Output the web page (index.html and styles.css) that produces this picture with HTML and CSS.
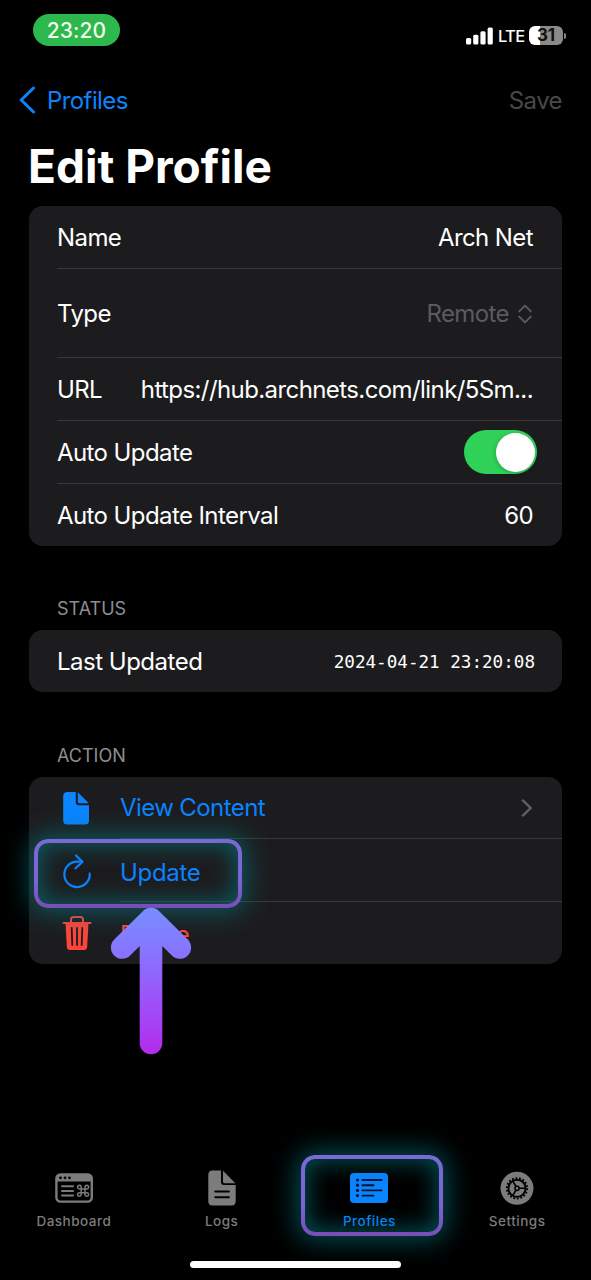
FILE: index.html
```html
<!DOCTYPE html>
<html lang="en">
<head>
<meta charset="utf-8">
<title>Edit Profile</title>
<link rel="stylesheet" href="styles.css">
</head>
<body>
<div class="screen">
  <header class="status">
    <span class="clock">23:20</span>
    <div class="status-right">
      <svg class="signal" width="28" height="18" viewBox="0 0 28 18" fill="#fff"><rect x="0" y="11" width="5.2" height="6.5" rx="1.5"/><rect x="7.2" y="7.7" width="5.2" height="9.8" rx="1.5"/><rect x="14.4" y="4.3" width="5.2" height="13.2" rx="1.5"/><rect x="21.6" y="0.5" width="5.2" height="17" rx="1.5"/></svg>
      <span class="lte">LTE</span>
      <span class="battery">31</span>
      <span class="nub"></span>
    </div>
  </header>

  <nav class="nav">
    <a class="back"><svg width="17" height="28" viewBox="0 0 17 28" fill="none" stroke="#0a84ff" stroke-width="3" stroke-linecap="round" stroke-linejoin="round"><path d="M14.5 2 2.2 14l12.3 12"/></svg><span>Profiles</span></a>
    <span class="save">Save</span>
  </nav>
  <h1 class="title">Edit Profile</h1>

  <section class="card form">
    <div class="row"><span>Name</span><span>Arch Net</span></div>
    <div class="row tall"><span>Type</span><span class="muted"><span>Remote</span><svg width="14" height="20" viewBox="0 0 14 20" fill="none" stroke="#5b5b5f" stroke-width="2" stroke-linecap="round" stroke-linejoin="round"><path d="M1.2 7.4 7 1.6l5.800 5.800M1.200 12.600 7 18.400l5.800-5.800"/></svg></span></div>
    <div class="row"><span>URL</span><span>https://hub.archnets.com/link/5Sm...</span></div>
    <div class="row"><span>Auto Update</span><span class="toggle"><span class="knob"></span></span></div>
    <div class="row"><span>Auto Update Interval</span><span>60</span></div>
  </section>

  <h2 class="heading">STATUS</h2>
  <section class="card"><div class="row"><span class="last-updated">Last Updated</span><time class="stamp">2024-04-21 23:20:08</time></div></section>

  <h2 class="heading">ACTION</h2>
  <section class="card actions">
    <div class="row action">
      <svg class="icon" width="30" height="34" viewBox="0 0 30 34" fill="#0a84ff"><path d="M5.500 1H13.800V11.500Q13.800 14.200 16.500 14.200H27V29.500Q27 33.500 23 33.500H5Q1.200 33.500 1.200 29.500V5Q1.200 1 5.500 1Z"/><path d="M15.800 1.200 26.800 12.300H17Q15.800 12.300 15.800 11Z"/></svg>
      <span>View Content</span>
      <svg class="chevron" width="12" height="18" viewBox="0 0 12 18" fill="none" stroke="#636367" stroke-width="2.400" stroke-linecap="round" stroke-linejoin="round"><path d="M2 1.500 9.700 9 2 16.500"/></svg>
    </div>
    <div class="row action update">
      <svg class="icon" width="30" height="36" viewBox="0 0 30 36" fill="none" stroke="#0a84ff" stroke-width="2.200" stroke-linecap="round" stroke-linejoin="round"><path d="M20 8.700H15A12.700 12.700 0 1 0 27.700 20.500"/><path d="M14 2.500 20.500 8.900 13.500 15.300"/></svg>
      <span>Update</span>
      <span class="highlight update-mark"></span>
    </div>
    <div class="row action delete">
      <svg class="icon" width="30" height="36" viewBox="0 0 30 36" fill="none" stroke="#ff453a" stroke-linecap="round"><path d="M1.500 8H28.500" stroke-width="2"/><path d="M9 7V4.500Q9 2 11.500 2h7Q21 2 21 4.500V7" stroke-width="2"/><path d="M3.500 8h23l-1.300 23.500Q25 35 22 35H8Q5 35 4.800 31.500Z" fill="#ff453a" stroke="none"/><path d="M9.700 13l.6 17M15 13v17M20.300 13l-.6 17" stroke="#1c1c1e" stroke-width="1.800"/></svg>
      <span class="delete-label">Delete</span>
      <svg class="arrow" width="82" height="148" viewBox="0 0 82 148" fill="none"><defs><linearGradient id="arrowFill" gradientUnits="userSpaceOnUse" x1="0" y1="0" x2="0" y2="147"><stop offset="0" stop-color="#778fff"/><stop offset=".35" stop-color="#8a70ff"/><stop offset="1" stop-color="#b42bee"/></linearGradient></defs><path d="M41 12V136M12.200 40.500 41 12 69.800 40.500" stroke="url(#arrowFill)" stroke-width="22.600" stroke-linecap="round" stroke-linejoin="round"/></svg>
    </div>
  </section>

  <footer class="tabs">
    <div class="tab">
      <svg width="40" height="36" viewBox="0 0 40 36" fill="none" stroke="#7c7c7c"><rect x="2.400" y="4.400" width="35.400" height="27.200" rx="4" stroke-width="2.400"/><path d="M2 11.500V8q0-4 4-4h28q4 0 4 4v3.500Z" fill="#7c7c7c" stroke="none"/><path d="M8 16.200h11M8 20.900h11M8 25.600h11" stroke-width="2" stroke-linecap="round"/><path d="M27.200 18.900h3.800v3.800h-3.800ZM27.200 18.900h-1.600a1.800 1.800 0 1 1 1.600-1.700ZM31 18.900v-1.700a1.800 1.800 0 1 1 1.600 1.700ZM27.200 22.700v1.700a1.800 1.800 0 1 1-1.600-1.700ZM31 22.700h1.600a1.800 1.800 0 1 1-1.600 1.700Z" stroke-width="1.500"/><g fill="#000" stroke="none"><circle cx="6.500" cy="7.800" r="1.400"/><circle cx="11" cy="7.800" r="1.400"/><circle cx="15.500" cy="7.800" r="1.400"/></g></svg>
      <span>Dashboard</span>
    </div>
    <div class="tab">
      <svg width="30" height="36" viewBox="0 0 30 36" fill="#7c7c7c"><path d="M5.500.500H14V12Q14 15 17 15H28.700V31Q28.700 35.500 24.500 35.500H5.500Q1.300 35.500 1.300 31V5Q1.300.500 5.500.500Z"/><path d="M16 .8 28.300 13.200H17.500Q16 13.200 16 11.800Z"/><path d="M8.300 21.500h13.600M8.300 27.300h13.600" stroke="#000" stroke-width="2" stroke-linecap="round"/></svg>
      <span>Logs</span>
    </div>
    <div class="tab active">
      <svg width="40" height="36" viewBox="0 0 40 36"><rect x="1" y="3" width="38" height="30" rx="4" fill="#0a84ff"/><path d="M13.500 10h19M13.500 15.200h11M13.500 20.400h19M13.500 25.600h11" stroke="#00152b" stroke-width="1.900" stroke-linecap="round"/><g fill="#00152b"><circle cx="8.500" cy="10" r="1.600"/><circle cx="8.500" cy="15.200" r="1.600"/><circle cx="8.500" cy="20.400" r="1.600"/><circle cx="8.500" cy="25.600" r="1.600"/></g></svg>
      <span>Profiles</span>
      <span class="highlight tab-mark"></span>
    </div>
    <div class="tab">
      <svg width="36" height="36" viewBox="0 0 36 36" fill="none"><circle cx="18" cy="18.300" r="16.500" fill="#7c7c7c"/><circle cx="18" cy="18.300" r="8.600" stroke="#000" stroke-width="1.900"/><circle cx="18" cy="18.300" r="10.200" stroke="#000" stroke-width="1.900" stroke-dasharray="1.800 1.760"/><circle cx="18" cy="18.300" r="2.100" stroke="#000" stroke-width="1.500"/><path d="M20 18.300h6.500M17 16.500l-3.300-5.600M17 20.100l-3.300 5.600" stroke="#000" stroke-width="1.600"/></svg>
      <span>Settings</span>
    </div>
  </footer>
  <div class="home"></div>
</div>
</body>
</html>
```
FILE: styles.css
```css
* { box-sizing: border-box; }
body { margin: 0; background: #000; }
svg { display: block; flex: none; }
.screen {
  width: 591px; height: 1280px; overflow: hidden;
  display: flex; flex-direction: column;
  background: #000; color: #fff;
  font: 400 24px/30px Inter, "Liberation Sans", sans-serif;
  letter-spacing: -.59px;
  white-space: nowrap;
}
.status { height: 70px; padding: 14px 25px 0 33px; display: flex; justify-content: space-between; align-items: flex-start; }
.clock { width: 87px; height: 32px; border-radius: 16px; background: #2db84d; text-align: center; font-size: 21px; line-height: 33px; font-weight: 500; color: #f2fbe9; letter-spacing: .1px; }
.status-right { display: flex; align-items: center; height: 19px; margin-top: 12px; }
.lte { width: 31px; margin-left: 4px; font-size: 16.5px; letter-spacing: -.7px; font-weight: 500; }
.battery { width: 34px; height: 19px; border-radius: 6px; background: linear-gradient(90deg, #fff 31%, #8a8a8a 31%); color: #111; font-size: 17px; line-height: 19px; font-weight: 700; text-align: center; letter-spacing: -.2px; }
.nub { width: 2px; height: 6px; margin-left: 1px; border-radius: 0 2px 2px 0; background: #8a8a8a; }
.nav { height: 60px; padding: 2px 29px 0 19px; display: flex; justify-content: space-between; align-items: center; }
.back { display: flex; align-items: center; gap: 11px; color: #0a84ff; }
.back svg { margin-top: -2px; }
.save { color: #48484a; }
.title { margin: 0; height: 76px; padding: 0 28px; font-size: 46px; line-height: 72px; font-weight: 700; letter-spacing: 0; }
.card { margin: 0 29px; background: #1c1c1e; border-radius: 14px; flex: none; }
.row { position: relative; height: 63px; padding: 0 29px 0 28px; display: flex; align-items: center; justify-content: space-between; }
.row + .row::before { content: ""; position: absolute; left: 28px; right: 0; top: -1px; height: 1px; background: #38383b; }
.row:last-child { height: 62px; }
.form .tall { height: 89px; }
.form .row:last-child { padding-top: 2px; }
.muted { display: flex; align-items: center; gap: 9px; color: #5b5b5f; }
.muted svg { margin-right: 1px; }
.toggle { width: 73px; height: 44px; margin: -2px -4px 0 0; padding: 3px 2px 2px; border-radius: 22px; background: #30d158; display: flex; justify-content: flex-end; }
.knob { width: 39px; height: 39px; border-radius: 50%; background: #fff; box-shadow: -1px 1px 4px #0003; }
.heading { margin: 0; height: 84px; padding: 48px 57px 0; font-size: 18px; line-height: 30px; font-weight: 400; letter-spacing: 0; color: #8d8d93; flex: none; }
.last-updated { padding-top: 2px; letter-spacing: -.5px; }
.stamp { font: 400 17.600px/30px "DejaVu Sans Mono", monospace; letter-spacing: 0; margin: 2px -2px 0 0; }
.heading ~ .heading { padding-top: 49px; height: 85px; }
.actions .row:first-child { height: 62px; }
.action { justify-content: flex-start; padding-left: 33px; color: #0a84ff; }
.actions .action + .action::before { left: 91px; }
.icon { width: 30px; margin-right: 28px; }
.update span:first-of-type { padding-top: 5px; letter-spacing: -.3px; }
.chevron { margin-left: auto; }
.delete { color: #ff453a; }
.delete-label { padding-top: 3px; }
.highlight { position: absolute; border-radius: 14px; box-shadow: 0 0 26px 4px #00808a99, inset 0 0 22px 7px #00808a99; }
.highlight::before { content: ""; position: absolute; inset: 0; padding: 4px; border-radius: inherit; background: linear-gradient(#7b68d6, #7d63d6 60%, #7a4cb6); mask: linear-gradient(#000 0 0) content-box exclude, linear-gradient(#000 0 0); }
.update-mark { left: 5px; top: 0; width: 208px; height: 69px; z-index: 1; }
.arrow { position: absolute; left: 81px; top: 5px; z-index: 2; }
.tabs { margin-top: auto; height: 91px; display: grid; grid-template-columns: repeat(4, 1fr); color: #7c7c7c; font-size: 13.500px; line-height: 18px; font-weight: 500; letter-spacing: .5px; }
.tab { position: relative; display: flex; flex-direction: column; align-items: center; gap: 6px; }
.active { color: #0a84ff; }
.tab-mark { left: 5px; top: -15px; width: 142px; height: 81px; }
.home { width: 211px; height: 7px; margin: 0 auto 12px; border-radius: 4px; background: #fff; flex: none; }
```
